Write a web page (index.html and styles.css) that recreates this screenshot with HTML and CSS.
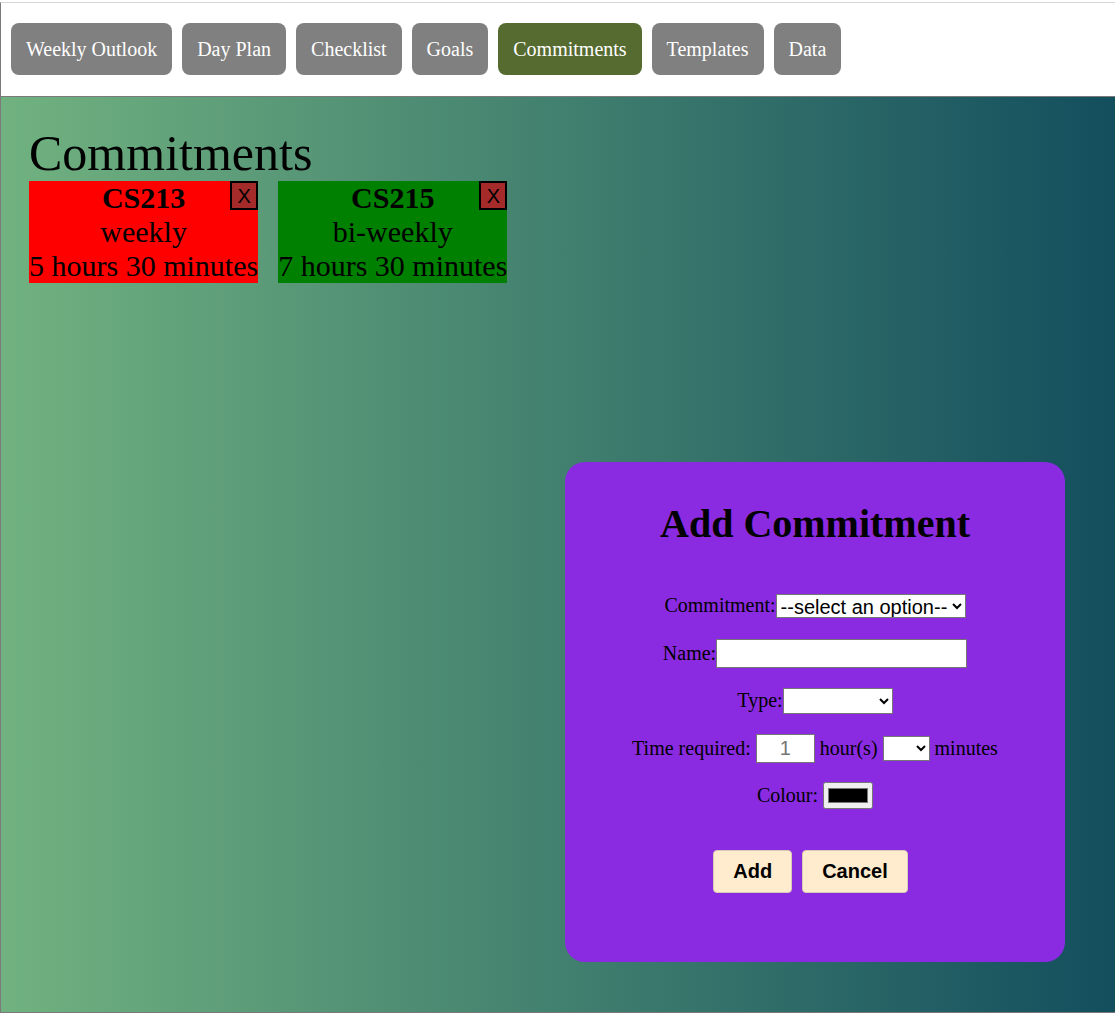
FILE: index.html
```html
<!DOCTYPE html>
<html>
<head>
<meta charset="utf-8">
<title>Commitments</title>
<link rel="stylesheet" href="styles.css">
</head>
<body>
<div class="page">
  <header class="topbar">
    <nav class="nav">
      <button class="nav-btn">Weekly Outlook</button>
      <button class="nav-btn">Day Plan</button>
      <button class="nav-btn">Checklist</button>
      <button class="nav-btn">Goals</button>
      <button class="nav-btn active">Commitments</button>
      <button class="nav-btn">Templates</button>
      <button class="nav-btn">Data</button>
    </nav>
  </header>
  <main class="main">
    <h1 class="title">Commitments</h1>
    <div class="cards">
      <div class="card card-red">
        <button class="close">X</button>
        <div class="card-name">CS213</div>
        <div>weekly</div>
        <div>5 hours 30 minutes</div>
      </div>
      <div class="card card-green">
        <button class="close">X</button>
        <div class="card-name">CS215</div>
        <div>bi-weekly</div>
        <div>7 hours 30 minutes</div>
      </div>
    </div>
  </main>
  <div class="modal">
    <h2 class="modal-title">Add Commitment</h2>
    <form class="form">
      <div class="row">
        <label>Commitment:</label><select class="sel sel-commit"><option>--select an option--</option></select>
      </div>
      <div class="row">
        <label>Name:</label><input class="txt" type="text">
      </div>
      <div class="row">
        <label>Type:</label><select class="sel sel-type"><option></option></select>
      </div>
      <div class="row gap">
        <label>Time required:</label><input class="num" type="text" placeholder="1"><span>hour(s)</span><select class="sel sel-min"><option></option></select><span>minutes</span>
      </div>
      <div class="row gap">
        <label>Colour:</label><input class="color" type="color" value="#000000">
      </div>
      <div class="actions">
        <button type="button" class="act act-add">Add</button>
        <button type="button" class="act act-cancel">Cancel</button>
      </div>
    </form>
  </div>
</div>
</body>
</html>
```

FILE: styles.css
```css
html, body {
  margin: 0;
  padding: 0;
  height: 100%;
}
body {
  padding-top: 2px;
  box-sizing: border-box;
  font-family: "Liberation Serif", "Times New Roman", serif;
  background: #ffffff;
  overflow: hidden;
}
.page {
  height: 1011px;
  display: flex;
  flex-direction: column;
  border-top: 1px solid #d6d6d6;
  border-left: 1px solid #7a7a7a;
  box-sizing: border-box;
}
.topbar {
  background: #ffffff;
  padding: 20px 10px 21px 10px;
  border-bottom: 1px solid #7a7a7a;
}
.nav {
  display: flex;
  gap: 10px;
}
.nav-btn {
  font-family: "Liberation Serif", "Times New Roman", serif;
  font-size: 20px;
  line-height: 24px;
  color: #ffffff;
  background: #808080;
  border: none;
  border-radius: 8px;
  padding: 14px 15px;
  margin: 0;
}
.nav-btn.active {
  background: #556b2f;
}
.main {
  flex: 1;
  background: linear-gradient(to right, #71b280, #134e5e);
  padding: 28px 28px;
  border-bottom: 1px solid #7a7a7a;
}
.title {
  font-size: 50px;
  font-weight: normal;
  margin: 0;
  line-height: 56px;
  color: #000;
}
.cards {
  display: flex;
  gap: 20px;
  align-items: flex-start;
}
.card {
  position: relative;
  font-size: 30px;
  line-height: 34px;
  text-align: center;
  color: #000;
}
.card-red { background: #ff0000; }
.card-green { background: #008000; }
.card-name { font-weight: bold; }
.close {
  position: absolute;
  top: 0;
  right: 0;
  width: 28px;
  height: 29px;
  box-sizing: border-box;
  background: #a52a2a;
  border: 2px solid #000;
  padding: 0;
  font-family: "Liberation Sans", Arial, sans-serif;
  font-size: 20px;
  line-height: 22px;
  color: #000;
}
.modal {
  position: fixed;
  right: 50px;
  bottom: 51px;
  width: 500px;
  height: 500px;
  background: #8a2be2;
  border-radius: 20px;
  box-sizing: border-box;
  padding-top: 39px;
  text-align: center;
}
.modal-title {
  font-size: 40px;
  line-height: 46px;
  font-weight: bold;
  margin: 0;
  color: #000;
}
.form {
  margin-top: 35px;
  display: flex;
  flex-direction: column;
  align-items: center;
  font-size: 20px;
}
.row {
  height: 47.5px;
  display: flex;
  align-items: center;
  justify-content: center;
}
.row.gap {
  gap: 5px;
}
.row label, .row span {
  font-size: 20px;
}
.sel {
  font-family: "Liberation Sans", Arial, sans-serif;
  font-size: 20px;
  box-sizing: border-box;
  border: 1px solid #767676;
  background: #fff;
  color: #000;
  padding: 0;
  margin: 0;
  border-radius: 0;
}
.sel-commit { width: 190px; height: 24px; }
.sel-type { width: 110px; height: 26px; }
.sel-min { width: 47px; height: 25px; }
.txt, .num {
  font-family: "Liberation Sans", Arial, sans-serif;
  font-size: 20px;
  box-sizing: border-box;
  height: 29px;
  border: 1px solid #767676;
  padding: 1px 2px;
  margin: 0;
  background: #fff;
}
.txt { width: 251px; }
.num { width: 59px; text-align: center; }
.num::placeholder { color: #757575; }
.color {
  width: 50px;
  height: 27px;
  box-sizing: border-box;
  margin: 0;
}
.actions {
  margin-top: 30px;
  padding-right: 9px;
  display: flex;
  gap: 10px;
  justify-content: center;
}
.act {
  font-family: "Liberation Sans", Arial, sans-serif;
  font-size: 20px;
  font-weight: bold;
  background: #ffebcd;
  color: #000;
  border: 1px solid #d8cbb5;
  border-radius: 4px;
  height: 43px;
  padding: 0 19px;
  margin: 0;
}
```
